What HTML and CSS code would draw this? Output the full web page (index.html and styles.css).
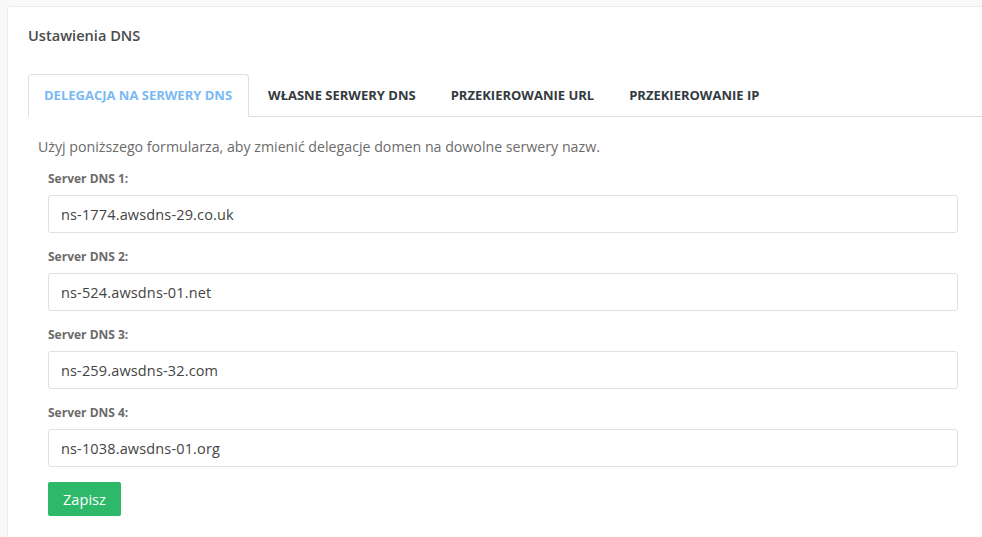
FILE: index.html
```html
<!DOCTYPE html>
<html lang="pl">
<head>
<meta charset="utf-8">
<title>Ustawienia DNS</title>
<link rel="stylesheet" href="styles.css">
</head>
<body>
<div class="card">
  <h2 class="card-title">Ustawienia DNS</h2>
  <ul class="tabs">
    <li class="tab active">DELEGACJA NA SERWERY DNS</li>
    <li class="tab">WŁASNE SERWERY DNS</li>
    <li class="tab">PRZEKIEROWANIE URL</li>
    <li class="tab">PRZEKIEROWANIE IP</li>
  </ul>
  <div class="tab-content">
    <p class="desc">Użyj poniższego formularza, aby zmienić delegacje domen na dowolne serwery nazw.</p>
    <form class="form">
      <div class="group">
        <label class="label">Server DNS 1:</label>
        <input class="input" type="text" value="ns-1774.awsdns-29.co.uk">
      </div>
      <div class="group">
        <label class="label">Server DNS 2:</label>
        <input class="input" type="text" value="ns-524.awsdns-01.net">
      </div>
      <div class="group">
        <label class="label">Server DNS 3:</label>
        <input class="input" type="text" value="ns-259.awsdns-32.com">
      </div>
      <div class="group">
        <label class="label">Server DNS 4:</label>
        <input class="input" type="text" value="ns-1038.awsdns-01.org">
      </div>
      <button class="btn" type="button">Zapisz</button>
    </form>
  </div>
</div>
</body>
</html>
```
FILE: styles.css
```css
html, body {
  margin: 0;
  padding: 0;
  background: #f9f9f9;
  font-family: "Open Sans", "Noto Sans", sans-serif;
  overflow: hidden;
}
.card {
  margin: 6px -40px 0 7px;
  background: #fff;
  border: 1px solid #ececec;
  border-radius: 3px;
  padding: 18px 20px 40px 20px;
  min-height: 600px;
}
.card-title {
  margin: 0;
  font-size: 14.6px;
  line-height: 20px;
  font-weight: 600;
  color: #4b4b4b;
}
.tabs {
  list-style: none;
  margin: 29px 0 0 0;
  padding: 0;
  display: flex;
  border-bottom: 1px solid #dedede;
}
.tab {
  font-size: 13px;
  font-weight: 700;
  color: #343a40;
  line-height: 16px;
  padding: 12px 16px 13px 15px;
  margin-right: 2px;
  margin-bottom: -1px;
  border: 1px solid transparent;
  border-radius: 4px 4px 0 0;
}
.tab.active {
  color: #7ab9f6;
  border-color: #dedede;
  border-bottom-color: #fff;
  background: #fff;
  margin-right: 3px;
}
.tab-content {
  padding: 20px 10px 0 10px;
}
.desc {
  margin: 0 0 13px 0;
  font-size: 14.2px;
  line-height: 20px;
  color: #6b6b6b;
}
.form {
  width: 910px;
  margin-left: 10px;
}
.group {
  margin-bottom: 15px;
}
.label {
  display: block;
  font-size: 12px;
  line-height: 18px;
  font-weight: 700;
  color: #6b6b6b;
  margin-bottom: 7px;
}
.input {
  display: block;
  box-sizing: border-box;
  width: 100%;
  height: 38px;
  border: 1px solid #e0e0e0;
  border-radius: 3px;
  padding: 0 12px;
  font-family: inherit;
  font-size: 14.5px;
  letter-spacing: 0.15px;
  color: #444;
  background: #fff;
}
.btn {
  display: block;
  height: 34px;
  padding: 0 15px;
  border: 0;
  border-radius: 2px;
  background: #2db86a;
  color: #fff;
  font-family: inherit;
  font-size: 14.6px;
  margin-top: 15px;
}
```
